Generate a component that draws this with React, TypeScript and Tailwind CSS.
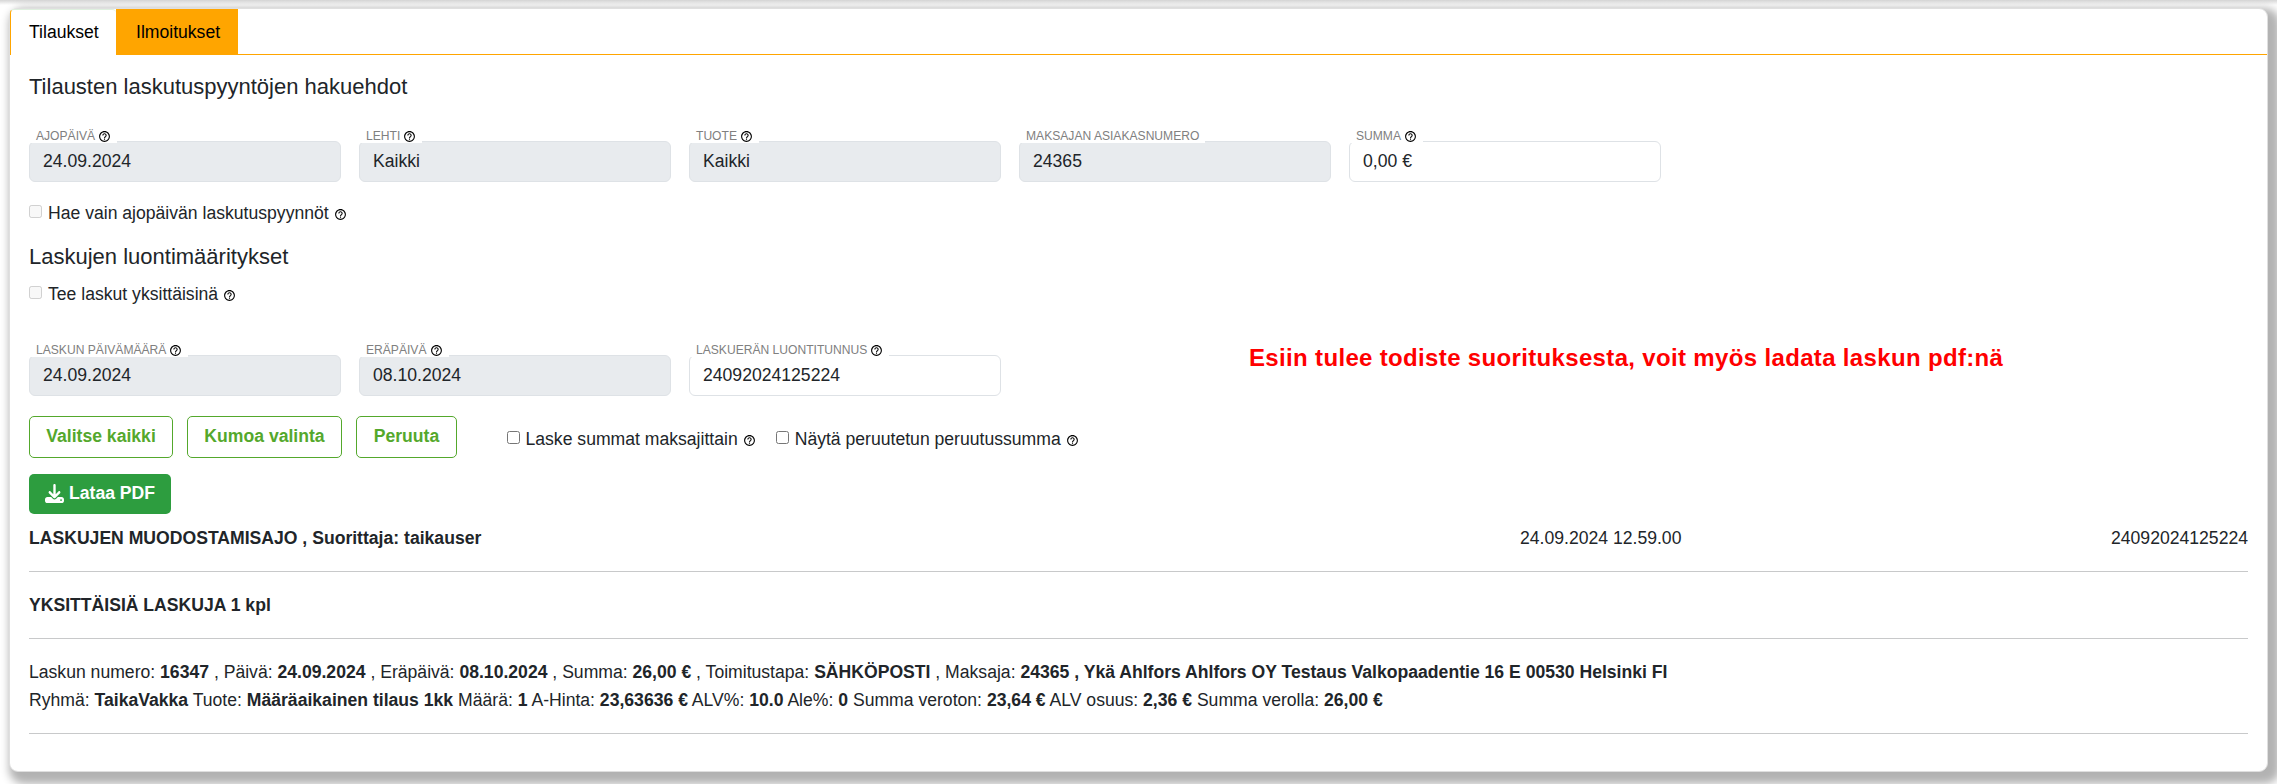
import type { ReactNode } from "react";
import { MdHelpOutline } from "react-icons/md";

function Help({ className = "" }: { className?: string }) {
  return <MdHelpOutline className={"inline-block size-[13px] shrink-0 text-black " + className} />;
}

function DownloadIcon() {
  return (
    <svg viewBox="0 0 512 512" fill="currentColor" className="-mt-px size-[19px]">
      <path d="M288 32c0-17.700-14.300-32-32-32s-32 14.300-32 32v242.700l-73.400-73.400c-12.500-12.500-32.800-12.500-45.300 0s-12.500 32.800 0 45.300l128 128c12.500 12.500 32.800 12.500 45.300 0l128-128c12.500-12.500 12.500-32.800 0-45.300s-32.800-12.500-45.300 0L288 274.700V32z" />
      <path d="M64 352c-35.300 0-64 28.700-64 64v32c0 35.300 28.700 64 64 64h384c35.300 0 64-28.700 64-64v-32c0-35.300-28.700-64-64-64H346.500l-45.300 45.300c-25 25-65.500 25-90.500 0L165.500 352H64zm368 56a24 24 0 1 1 0 48 24 24 0 1 1 0-48z" />
    </svg>
  );
}

function Field({ label, value, help = true, disabled = true }: { label: string; value: string; help?: boolean; disabled?: boolean }) {
  return (
    <div className={"relative flex h-[41px] w-[312px] items-center rounded-md border border-[#dee2e6] pb-px pl-[13px] " + (disabled ? "bg-[#e8ebee]" : "bg-white")}>
      <span className="leading-6">{value}</span>
      <label className="absolute -top-[14px] left-0 flex h-[15px] items-center gap-[3px] bg-white pr-[6px] pl-[6px] text-[12.1px] leading-[15px] whitespace-nowrap text-[#808080]">
        <span className="pt-[2px]">{label}</span>
        {help && <Help className="mt-[2px]" />}
      </label>
    </div>
  );
}

function Check({ label, disabled = false }: { label: string; disabled?: boolean }) {
  return (
    <div className="flex h-[26px] items-center">
      <input type="checkbox" disabled={disabled} className="size-[13px]" />
      <span className="ml-[6px] pt-[5px] leading-[21px]">{label}</span>
      <Help className="mt-[7px] ml-[5px]" />
    </div>
  );
}

function OutlineButton({ children, className }: { children: ReactNode; className: string }) {
  return (
    <button className={"h-[42px] rounded-[5px] border border-[#54a82c] pb-px text-center font-bold text-[#54a82c] " + className}>
      {children}
    </button>
  );
}

const Rule = () => <hr className="border-t border-[#c8c9ca]" />;

export default function App() {
  return (
    <div className="relative h-[784px] w-[2277px] overflow-hidden bg-white pt-2 pl-[9px] font-['Liberation_Sans',Arial,sans-serif] text-[17.6px] text-[#212529]">
      <div className="absolute inset-x-0 top-0 h-[5px] bg-linear-to-b from-[#d6d6d6] to-transparent" />
      <div className="relative h-[764px] w-[2259px] rounded-[9px] border border-[#dfdfdf] bg-white shadow-[6px_6px_8px_6px_rgba(0,0,0,0.3)]">
        <div className="flex h-[46px] border-b border-[#ffa500] leading-[26px] text-black">
          <div className="-mb-px w-[106px] rounded-t-[4px] border-t border-l border-t-[#dff0df] border-l-[#ffa500] bg-white pt-[9px] pl-[18px]">Tilaukset</div>
          <div className="w-[122px] bg-[#ffa500] pt-[10px] pl-[20px]">Ilmoitukset</div>
        </div>
        <div className="flex flex-col px-[19px]">
          <h2 className="mt-[19px] h-[26px] text-[22px] leading-[26px]">Tilausten laskutuspyyntöjen hakuehdot</h2>
          <div className="mt-[41px] flex gap-[18px]">
            <Field label="AJOPÄIVÄ" value="24.09.2024" />
            <Field label="LEHTI" value="Kaikki" />
            <Field label="TUOTE" value="Kaikki" />
            <Field label="MAKSAJAN ASIAKASNUMERO" value="24365" help={false} />
            <Field label="SUMMA" value="0,00 €" disabled={false} />
          </div>
          <div className="mt-[16px]"><Check label="Hae vain ajopäivän laskutuspyynnöt" disabled /></div>
          <h2 className="mt-[20px] h-[26px] text-[22px] leading-[26px]">Laskujen luontimääritykset</h2>
          <div className="mt-[9px]"><Check label="Tee laskut yksittäisinä" disabled /></div>
          <div className="mt-[50px] flex gap-[18px]">
            <Field label="LASKUN PÄIVÄMÄÄRÄ" value="24.09.2024" />
            <Field label="ERÄPÄIVÄ" value="08.10.2024" />
            <Field label="LASKUERÄN LUONTITUNNUS" value="24092024125224" disabled={false} />
          </div>
          <div className="mt-[20px] flex items-center gap-[14px]">
            <OutlineButton className="w-[144px]">Valitse kaikki</OutlineButton>
            <OutlineButton className="w-[155px]">Kumoa valinta</OutlineButton>
            <OutlineButton className="w-[101px]">Peruuta</OutlineButton>
            <div className="ml-[35.5px] flex gap-[20px]">
              <Check label="Laske summat maksajittain" />
              <Check label="Näytä peruutetun peruutussumma" />
            </div>
          </div>
          <button className="mt-[16px] flex h-[40px] w-[142px] items-center gap-[5px] rounded-[5px] bg-[#2d9d3f] pl-[16px] font-bold text-white">
            <DownloadIcon />
            <span className="pb-px">Lataa PDF</span>
          </button>
          <div className="mt-[10px] flex h-[28px] leading-[28px]">
            <b className="w-[1491px]">LASKUJEN MUODOSTAMISAJO , Suorittaja: taikauser</b>
            <span>24.09.2024 12.59.00</span>
            <span className="ml-auto">24092024125224</span>
          </div>
          <div className="mt-[19px]"><Rule /></div>
          <b className="mt-[19px] mb-[19px] block h-[28px] leading-[28px]">YKSITTÄISIÄ LASKUJA 1 kpl</b>
          <Rule />
          <div className="mt-[19px] mb-[19px] leading-[28px] whitespace-nowrap">
            <p>
              Laskun numero: <b>16347</b> , Päivä: <b>24.09.2024</b> , Eräpäivä: <b>08.10.2024</b> , Summa: <b>26,00 €</b> , Toimitustapa: <b>SÄHKÖPOSTI</b> , Maksaja: <b>24365 , Ykä Ahlfors Ahlfors OY Testaus Valkopaadentie 16 E 00530 Helsinki FI</b>
            </p>
            <p>
              Ryhmä: <b>TaikaVakka</b> Tuote: <b>Määräaikainen tilaus 1kk</b> Määrä: <b>1</b> A-Hinta: <b>23,63636 €</b> ALV%: <b>10.0</b> Ale%: <b>0</b> Summa veroton: <b>23,64 €</b> ALV osuus: <b>2,36 €</b> Summa verolla: <b>26,00 €</b>
            </p>
          </div>
          <Rule />
        </div>
      </div>
      <p className="absolute top-[344px] left-[1249px] text-[24px] leading-[28px] font-bold tracking-[0.34px] whitespace-nowrap text-[#ff0000]">
        Esiin tulee todiste suorituksesta, voit myös ladata laskun pdf:nä
      </p>
    </div>
  );
}
